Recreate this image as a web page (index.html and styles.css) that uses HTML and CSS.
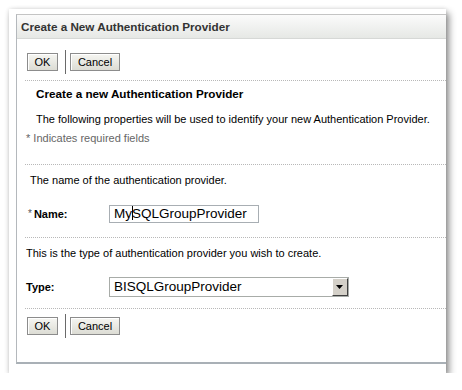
FILE: index.html
```html
<!DOCTYPE html>
<html lang="en">
<head>
  <meta charset="UTF-8"/>
  <title>Create a New Authentication Provider</title>
  <link rel="stylesheet" href="styles.css">
</head>
<body>
  <div class="paper">
    <div class="panel">
      <div class="panel-head">Create a New Authentication Provider</div>
      <div class="toolbar">
        <button class="btn btn-ok">OK</button>
        <span class="sep"></span>
        <button class="btn btn-cancel">Cancel</button>
      </div>
      <div class="rule"></div>
      <div class="intro">
        <div class="intro-title">Create a new Authentication Provider</div>
        <div class="intro-text">The following properties will be used to identify your new Authentication Provider.</div>
        <div class="req-note">* Indicates required fields</div>
      </div>
      <div class="rule rule-intro"></div>
      <div class="section">
        <div class="hint hint-name">The name of the authentication provider.</div>
        <div class="field">
          <label class="field-label"><span class="star">*</span>Name:</label>
          <div class="textbox">My<span class="caret"></span>SQLGroupProvider</div>
        </div>
      </div>
      <div class="rule rule-name"></div>
      <div class="section">
        <div class="hint">This is the type of authentication provider you wish to create.</div>
        <div class="field field-type">
          <label class="field-label">Type:</label>
          <div class="select">
            <span class="select-value">BISQLGroupProvider</span>
            <span class="select-btn"><svg width="8" height="5" viewBox="0 0 8 5"><path d="M0 0h7l-3.5 4z" fill="#000"/></svg></span>
          </div>
        </div>
      </div>
      <div class="rule rule-type"></div>
      <div class="toolbar toolbar-bottom">
        <button class="btn btn-ok">OK</button>
        <span class="sep"></span>
        <button class="btn btn-cancel">Cancel</button>
      </div>
    </div>
  </div>
</body>
</html>
```

FILE: styles.css
```css
*{box-sizing:border-box;margin:0;padding:0;}
body{background:#fff;font-family:"Liberation Sans",Arial,sans-serif;font-size:11px;color:#000;}
.paper{margin:9px 0 0 9px;width:437px;height:364px;background:#fff;padding:5px 0 0 7px;box-shadow:3px 4px 7px rgba(0,0,0,0.45),0 0 4px rgba(0,0,0,0.12);}
.panel{height:350px;border-top:1px solid #c4c4c4;border-left:1px solid #b4b8bc;border-bottom:2px solid #a9b0b6;}
.panel-head{height:24px;padding:0 0 0 4px;line-height:23px;font-size:11.7px;font-weight:bold;color:#333;background:linear-gradient(#fbfbfb,#e6e8e5);border-bottom:1px solid #d6d8d6;}
.toolbar{display:flex;align-items:center;height:35px;padding:11px 0 0 10px;}
.toolbar-bottom{height:31px;padding-top:2px;}
.btn{height:18px;font-family:"Liberation Sans",Arial,sans-serif;font-size:11px;color:#000;background:linear-gradient(#f6f6f2,#dcdcd4);border:1px solid #8c8c8c;box-shadow:inset 1px 1px 0 #fff;cursor:pointer;}
.btn-ok{width:31px;}
.btn-cancel{width:50px;}
.sep{width:1px;height:24px;background:#6a6a6a;margin:0 4px 0 7px;}
.rule{margin:6px 0 0 8px;border-top:1px dotted #b8b8b8;}
.rule-intro{margin-top:0;}
.rule-name{margin-top:14px;}
.rule-type{margin-top:11px;}
.intro{padding:6px 0 19px 0;line-height:14px;}
.intro-title{padding-left:19px;font-size:11.7px;font-weight:bold;}
.intro-text{padding-left:19px;margin-top:11px;}
.req-note{padding-left:9px;margin-top:5px;color:#666;}
.section{line-height:14px;}
.hint{padding:8px 0 0 9px;}
.hint-name{padding-left:13px;}
.field{display:flex;align-items:center;margin-top:18px;}
.field-type{margin-top:17px;}
.field-label{width:92px;padding-left:9px;font-weight:bold;}
.star{color:#555;font-weight:normal;font-size:10px;margin:0 2px 0 2px;vertical-align:1px;}
.textbox{width:150px;height:18px;border:1px solid #a8aeb3;padding:0 0 0 4px;font-size:13.5px;line-height:16px;white-space:nowrap;}
.caret{display:inline-block;width:1px;height:14px;background:#000;vertical-align:-2px;margin-right:-1px;}
.select{display:flex;width:240px;height:20px;border:1px solid #a8aca8;}
.select-value{flex:1;padding-left:4px;font-size:13.5px;line-height:18px;}
.select-btn{display:flex;align-items:center;justify-content:center;width:16px;height:18px;background:#d4d0c8;border:1px solid;border-color:#fff #404040 #404040 #fff;}
```
